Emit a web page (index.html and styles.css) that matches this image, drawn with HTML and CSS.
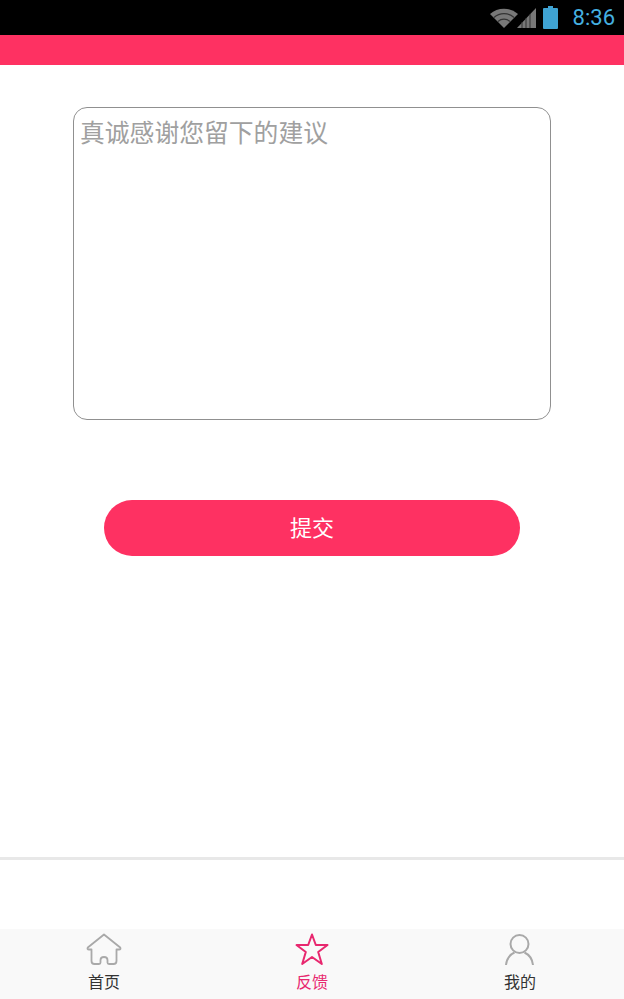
FILE: index.html
```html
<!DOCTYPE html>
<html lang="zh-CN">

<head>
    <meta charset="UTF-8">
    <meta name="viewport" content="width=device-width, initial-scale=1.0">
    <title>反馈</title>
    <link rel="stylesheet" href="styles.css">
</head>

<body>
    <div class="status-bar">
        <svg class="wifi" width="28" height="22" viewBox="0 0 28 22">
            <path d="M0 7 A21 21 0 0 1 28 7 L14 21 Z" fill="#787878" />
            <path d="M4 10.500 A15 15 0 0 1 24 10.500 M8 14.500 A9 9 0 0 1 20 14.500" fill="none" stroke="#333" stroke-width="1.200" />
        </svg>
        <svg class="signal" width="19" height="22" viewBox="0 0 19 22">
            <path d="M0 21 L19 1 V21 Z" fill="#787878" />
            <path d="M5 21 V15 M9 21 V11 M13 21 V7" stroke="#333" stroke-width="1" />
        </svg>
        <svg class="battery" width="15" height="23" viewBox="0 0 15 23">
            <path d="M5 0 H10 V2 H14 Q15 2 15 3 V22 Q15 23 14 23 H1 Q0 23 0 22 V3 Q0 2 1 2 H5 Z" fill="#3fa3d3" />
        </svg>
        <span class="clock">8:36</span>
    </div>
    <div class="title-bar"></div>

    <main class="content">
        <textarea class="advice" placeholder="真诚感谢您留下的建议"></textarea>
        <button class="submit" type="button">提交</button>
    </main>

    <div class="bottom-space"></div>

    <nav class="tabs">
        <a class="tab">
            <svg width="36" height="34" viewBox="0 0 36 34">
                <path d="M18 1.500 L1.800 14.500 Q0.800 16.500 3 16.500 H5.500 V28 Q5.500 31 8.500 31 H13 Q14.500 31 14.500 29.500 V27 Q14.500 24 18 24 Q21.500 24 21.500 27 V29.500 Q21.500 31 23 31 H27.500 Q30.500 31 30.500 28 V16.500 H33 Q35.200 16.500 34.200 14.500 Z" fill="none" stroke="#a9a9a9" stroke-width="1.800" stroke-linejoin="round" />
            </svg>
            <span>首页</span>
        </a>
        <a class="tab active">
            <svg width="36" height="34" viewBox="0 0 36 34">
                <path d="M18 1.500 L21.800 12 H33.500 L24.200 19 L27.800 31 L18 24 L8.200 31 L11.800 19 L2.500 12 H14.200 Z" fill="none" stroke="#e8286f" stroke-width="2" stroke-linejoin="round" />
            </svg>
            <span>反馈</span>
        </a>
        <a class="tab">
            <svg width="36" height="34" viewBox="0 0 36 34">
                <circle cx="17.500" cy="11" r="9" fill="none" stroke="#a9a9a9" stroke-width="2" />
                <path d="M4 32 Q5 23 12.500 19.500 M31 32 Q30 23 22.500 19.500" fill="none" stroke="#a9a9a9" stroke-width="2" />
            </svg>
            <span>我的</span>
        </a>
    </nav>
</body>

</html>
```

FILE: styles.css
```css
* {
    box-sizing: border-box;
    margin: 0;
    padding: 0;
}

html, body {
    height: 100%;
}

body {
    width: 624px;
    height: 999px;
    overflow: hidden;
    display: flex;
    flex-direction: column;
    background-color: white;
    font-family: "Roboto", "Noto Sans CJK SC", sans-serif;
}

.status-bar {
    height: 35px;
    display: flex;
    align-items: center;
    justify-content: flex-end;
    padding-right: 9px;
    background-color: black;
}

.wifi {
    margin-right: -1px;
}

.signal {
    margin-right: 7px;
}

.battery {
    margin-right: 15px;
}

.clock {
    font-size: 22px;
    color: #45b0e0;
}

.title-bar {
    height: 30px;
    background-color: #fe3162;
}

.content {
    flex: 1;
    display: flex;
    flex-direction: column;
    align-items: center;
    padding-top: 42px;
}

.advice {
    display: block;
    width: 478px;
    height: 313px;
    padding: 8px 6px;
    border: 1px solid #909090;
    border-radius: 14px;
    resize: none;
    outline: none;
    font-family: "Noto Sans CJK SC", sans-serif;
    font-size: 24.8px;
    line-height: 30px;
}

.advice::placeholder {
    color: #a0a0a0;
    opacity: 1;
}

.submit {
    width: 416px;
    height: 56px;
    margin-top: 80px;
    padding-bottom: 4px;
    border: none;
    border-radius: 28px;
    background-color: #fe3162;
    color: white;
    font-family: "Noto Sans CJK SC", sans-serif;
    font-size: 22px;
}

.bottom-space {
    height: 72px;
    border-top: 3px solid #e8e8e8;
}

.tabs {
    height: 70px;
    display: grid;
    grid-template-columns: repeat(3, 1fr);
    background-color: #f9f9f9;
}

.tab {
    display: flex;
    flex-direction: column;
    align-items: center;
    padding-top: 4px;
    font-family: "Noto Sans CJK SC", sans-serif;
    font-size: 16px;
    line-height: 22px;
    color: #333;
}

.tab svg {
    display: block;
    margin-bottom: 3px;
}

.tab.active {
    color: #e8286f;
}
```
